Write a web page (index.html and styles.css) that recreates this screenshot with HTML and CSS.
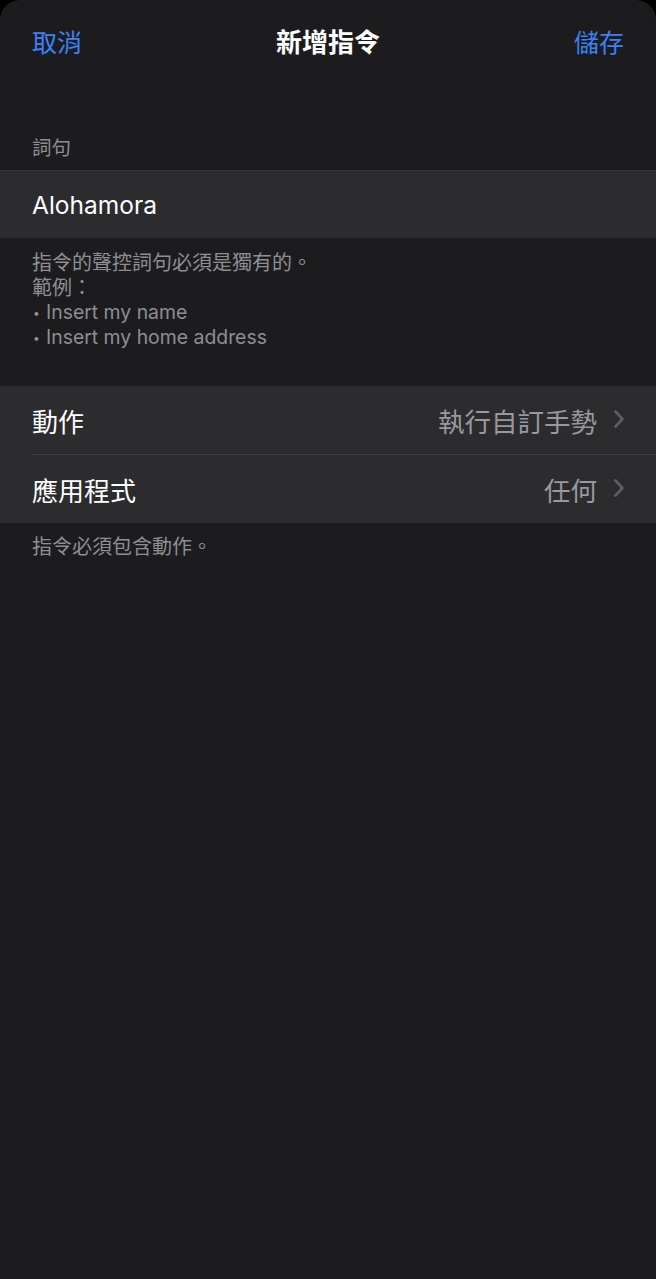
FILE: index.html
```html
<!DOCTYPE html>
<html lang="zh-Hant">
<head>
<meta charset="utf-8">
<title>新增指令</title>
<link rel="stylesheet" href="styles.css">
</head>
<body>
<div class="sheet">
  <header class="nav">
    <span class="nav-btn">取消</span>
    <span class="nav-title">新增指令</span>
    <span class="nav-btn">儲存</span>
  </header>

  <div class="section-header">詞句</div>
  <div class="group">
    <div class="cell field">Alohamora</div>
  </div>
  <div class="section-footer first">
    <div>指令的聲控詞句必須是獨有的。</div>
    <div>範例：</div>
    <div class="latin"><span class="dot">•</span>Insert my name</div>
    <div class="latin"><span class="dot">•</span>Insert my home address</div>
  </div>

  <div class="group second">
    <div class="cell row">
      <span class="label">動作</span>
      <span class="detail">執行自訂手勢
        <svg class="chev" width="12" height="20" viewBox="0 0 12 20"><path d="M2.5 2.5 L9.5 10 L2.5 17.5" fill="none" stroke="#5e5e63" stroke-width="2.6" stroke-linecap="round" stroke-linejoin="round"/></svg>
      </span>
    </div>
    <div class="sep"></div>
    <div class="cell row">
      <span class="label">應用程式</span>
      <span class="detail">任何
        <svg class="chev" width="12" height="20" viewBox="0 0 12 20"><path d="M2.5 2.5 L9.5 10 L2.5 17.5" fill="none" stroke="#5e5e63" stroke-width="2.6" stroke-linecap="round" stroke-linejoin="round"/></svg>
      </span>
    </div>
  </div>
  <div class="section-footer second-footer">
    <div>指令必須包含動作。</div>
  </div>
</div>
</body>
</html>
```

FILE: styles.css
```css
html, body {
  margin: 0;
  padding: 0;
  background: #000;
}
body {
  font-family: Inter, "Noto Sans CJK TC", sans-serif;
  color: #fff;
}
.sheet {
  background: #1c1c1e;
  min-height: 1279px;
  border-radius: 20px 20px 0 0;
  overflow: hidden;
}
.nav {
  height: 86px;
  padding: 0 32px;
  display: flex;
  align-items: center;
  justify-content: space-between;
  position: relative;
}
.nav-btn {
  color: #3a82f6;
  font-size: 25px;
  line-height: 30px;
}
.nav-title {
  position: absolute;
  left: 0;
  right: 0;
  text-align: center;
  font-size: 26px;
  line-height: 30px;
  font-weight: 700;
  pointer-events: none;
}
.section-header {
  padding: 50px 32px 9px;
  font-size: 19.5px;
  line-height: 25px;
  color: #8e8e93;
}
.group {
  background: #2c2c2e;
  border-top: 1px solid #38383a;
}
.cell {
  height: 68px;
  padding: 0 32px;
  display: flex;
  align-items: center;
  font-size: 26px;
}
.field {
  height: 67px;
  font-size: 24.5px;
  color: #fff;
}
.section-footer {
  padding: 13px 32px 0;
  font-size: 20px;
  line-height: 24.6px;
  color: #8e8e93;
}
.section-footer.first {
  padding-bottom: 37px;
}
.section-footer .latin {
  font-size: 19.4px;
  height: 24.6px;
}
.section-footer.second-footer {
  padding-top: 12px;
}
.dot {
  display: inline-block;
  width: 13px;
  font-size: 12px;
  vertical-align: 2px;
  margin-left: 1px;
}
.group.second {
  border-top: none;
}
.row {
  justify-content: space-between;
}
.label {
  color: #fff;
}
.detail {
  display: flex;
  align-items: center;
  gap: 16px;
  color: #98989e;
  font-size: 26.5px;
}
.chev {
  display: block;
  margin-top: -2px;
  margin-right: -1px;
}
.sep {
  height: 1px;
  margin-left: 32px;
  background: #3a3a3c;
}
```
